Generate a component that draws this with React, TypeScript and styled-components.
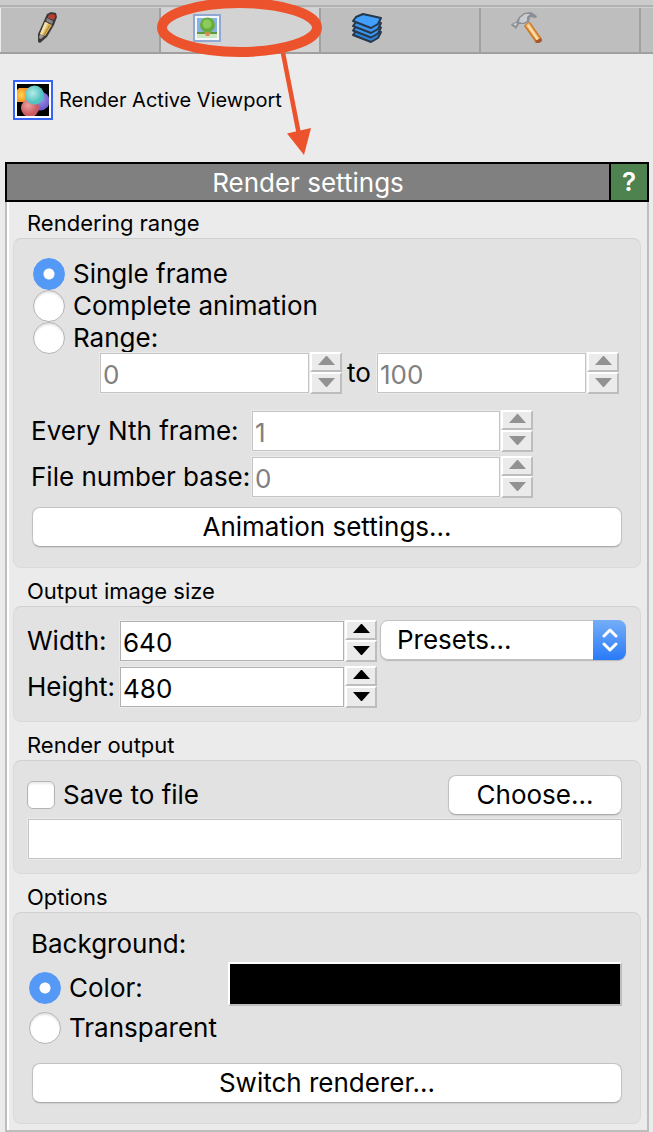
import React, { useState } from "react";
import styled, { createGlobalStyle, css } from "styled-components";

const GlobalStyle = createGlobalStyle`
  * { box-sizing: border-box; }
  body {
    margin: 0;
    background: #ebebeb;
    color: #000;
    font-family: Inter, "Liberation Sans", sans-serif;
    font-size: 26px;
    line-height: 32px;
  }
  button, input, select { font: inherit; color: inherit; margin: 0; }
`;

const Page = styled.main`
  position: relative;
  overflow: hidden;
`;

const TopEdge = styled.div`
  height: 8px;
  border-bottom: 1px solid #d0d0d0;
  background: linear-gradient(#cbcbcb 0 5px, #b0b0b0 5px 7px);
`;

const Tabs = styled.nav`
  display: flex;
  height: 46px;
  padding-left: 1px;
  background: linear-gradient(#bebebe, #bebebe) 1px 0 no-repeat;
  border-bottom: 2px solid #a0a0a0;
`;

const Tab = styled.button<{ $active?: boolean }>`
  display: flex;
  flex: 0 0 160px;
  padding: 4px 0 0 30px;
  border: 0;
  border-right: 2px solid #a0a0a0;
  background: ${(p) => (p.$active ? "#d3d3d3" : "#bebebe")};
`;

const Toolbar = styled.div`
  padding: 26px 13px 42px;
`;

const RenderButton = styled.button`
  display: flex;
  align-items: center;
  gap: 6px;
  padding: 0;
  border: 0;
  background: none;
  font-size: 20px;
`;

const RenderIcon = styled.span`
  display: flex;
  padding: 2px;
  border: 2px solid #3a62f7;
  background: #fff;
`;

const Panel = styled.section`
  margin: 0 4px 0 5px;
`;

const PanelHeader = styled.header`
  display: flex;
  height: 40px;
  border: 2px solid #000;
  background: #808080;
  color: #fff;
`;

const PanelTitle = styled.h1`
  flex: 1;
  margin: 0;
  font-size: 26px;
  font-weight: 400;
  line-height: 38px;
  text-align: center;
`;

const HelpButton = styled.button`
  width: 38px;
  padding: 0;
  border: 0;
  border-left: 2px solid #000;
  background: #4e824e;
  color: #fff;
  font-weight: 600;
`;

const PanelBody = styled.div`
  padding: 0 6px 6px;
  border: solid #bdbdbd;
  border-width: 0 2px 2px;
  box-shadow: inset 2px 0 #fff;
`;

const Group = styled.fieldset`
  min-width: 0;
  margin: 0;
  padding: 0;
  border: 0;
  & + & { margin-top: 2px; }
`;

const Legend = styled.legend`
  height: 36px;
  padding: 6px 14px 0;
  font-size: 22px;
  line-height: 30px;
`;

const GroupBox = styled.div<{ $pad: string }>`
  padding: ${(p) => p.$pad};
  border: 1px solid #dadada;
  border-top-color: #d0d0d0;
  border-radius: 8px;
  background: #e2e2e2;
`;

const ChoiceList = styled.div<{ $indent: number }>`
  padding-left: ${(p) => p.$indent}px;
`;

const ChoiceLabel = styled.label`
  display: flex;
  align-items: center;
  gap: 8px;
  height: 32px;
`;

const Radio = styled.input.attrs({ type: "radio" })`
  appearance: none;
  flex: none;
  width: 32px;
  height: 32px;
  border: 1px solid #b4b4b4;
  border-radius: 50%;
  background: #fff;
  box-shadow: inset 0 2px 2px #e4e4e4;
  &:checked {
    border-color: #5599f6;
    background: radial-gradient(circle, #fff 5px, #5599f6 6px);
    box-shadow: none;
  }
`;

const Checkbox = styled.input.attrs({ type: "checkbox" })`
  appearance: none;
  flex: none;
  width: 28px;
  height: 28px;
  border: 1px solid #b4b4b4;
  border-radius: 6px;
  background: #fff;
  box-shadow: inset 0 2px 2px #ececec;
  &:checked { background: #5599f6; }
`;

const RangeRow = styled.div`
  display: flex;
  align-items: center;
  gap: 5px;
  margin: -2px 3px 16px 72px;
`;

const FieldGrid = styled.div<{ $label: number; $right: number }>`
  display: grid;
  grid-template-columns: ${(p) => p.$label}px minmax(0, 1fr);
  align-items: center;
  row-gap: 4px;
  margin-right: ${(p) => p.$right}px;
`;

const SizeRow = styled.div`
  display: flex;
  align-items: flex-start;
  gap: 3px;
`;

const SizeFields = styled(FieldGrid)`
  flex: 1;
`;

const SpinBox = styled.div`
  display: flex;
  flex: 1;
  min-width: 0;
  height: 42px;
  gap: 1px;
`;

const textField = css`
  height: 40px;
  border: 1px solid #b0b0b0;
  border-radius: 0;
  outline: 1px solid #ebebeb;
  background: #fff;
`;

const SpinInput = styled.input`
  ${textField}
  flex: 1;
  width: 0;
  min-width: 0;
  margin: 1px 0 1px 1px;
  padding: 2px 2px 0;
  &:disabled {
    border-color: #c4c4c4;
    background: #fff;
    color: #808080;
  }
`;

const PathInput = styled.input`
  ${textField}
  display: block;
  width: calc(100% - 1px);
  margin: 4px 0 1px 1px;
  padding: 0 4px;
  border-color: #c4c4c4;
`;

const SpinButtons = styled.div`
  display: grid;
  grid-template-rows: 20px 22px;
  width: 32px;
`;

const SpinButton = styled.button`
  display: flex;
  align-items: flex-start;
  justify-content: center;
  padding: 2px 0 0;
  border: 2px solid;
  border-color: #fff #bdbdbd #bdbdbd #fff;
  background: #ebebeb;
  color: #000;
  & + & { padding-top: 4px; }
  &:disabled { color: #929292; }
`;

const PushButton = styled.button<{ $width?: string }>`
  display: block;
  width: ${(p) => p.$width ?? "auto"};
  height: 40px;
  padding: 0;
  border: 1px solid #c2c2c2;
  border-bottom-color: #ababab;
  border-radius: 8px;
  background: #fff;
  box-shadow: 0 1px 1px #d0d0d0;
`;

const WideButtonRow = styled.div<{ $top: number }>`
  display: grid;
  margin: ${(p) => p.$top}px 0 0 5px;
`;

const PresetBox = styled.div`
  position: relative;
  flex: 0 1 246px;
  height: 40px;
  border-radius: 8px;
  box-shadow: 0 1px 1px #b8b8b8;
`;

const PresetSelect = styled.select`
  appearance: none;
  width: 100%;
  height: 40px;
  padding: 0 40px 0 16px;
  border: 1px solid #c2c2c2;
  border-radius: 8px;
  background: #fff;
`;

const PresetCap = styled.span`
  position: absolute;
  top: 0;
  right: 0;
  display: flex;
  align-items: center;
  justify-content: center;
  width: 33px;
  height: 40px;
  border-radius: 0 8px 8px 0;
  background: linear-gradient(#74aef8, #2a7af8);
  pointer-events: none;
`;

const SaveRow = styled.div`
  display: flex;
  align-items: center;
  justify-content: space-between;
`;

const Caption = styled.div`
  padding-left: 4px;
  line-height: 36px;
`;

const ColorRow = styled.div`
  display: grid;
  grid-template-columns: 201px minmax(0, 1fr);
  align-items: end;
  margin-bottom: 6px;
`;

const ColorChoice = styled.div`
  padding: 0 0 2px 2px;
`;

const Swatch = styled.button`
  height: 44px;
  padding: 0;
  border: 2px solid;
  border-color: #fff #bdbdbd #bdbdbd #fff;
  background: #000;
`;

const Annotation = styled.svg`
  position: absolute;
  top: 0;
  left: 0;
  pointer-events: none;
`;

function PencilIcon() {
  return (
    <svg width="32" height="32" viewBox="0 0 32 32" aria-hidden="true">
      <path d="M16 2 L20 0 L25 1 L26 5 L23 13 L16 25 L9 31 L7 30 L7 22 Z" fill="#3c3a3a" />
      <path d="M17 4 L20 2 L24 4 L23 8 L17 6 Z" fill="#a7463c" />
      <path d="M20 2 L24 3 L24 6 L21 5 Z" fill="#c9352c" />
      <path d="M16 6 L22 9 L21 12 L15 9 Z" fill="#8a8784" />
      <path d="M14 10 L21 13 L14 24 L9 22 Z" fill="#e0b95a" />
      <path d="M14 10 L17 11 L11 23 L9 22 Z" fill="#f0dfb0" />
      <path d="M9 22 L13 24 L10 27 L8 26 Z" fill="#a39c92" />
      <path d="M19 13 L13 23" stroke="#a77b28" strokeWidth="1" />
    </svg>
  );
}

function PictureIcon() {
  return (
    <svg width="32" height="32" viewBox="0 0 32 32" aria-hidden="true">
      <rect x="3" y="3" width="26" height="26" fill="#f4f7fb" stroke="#90a8d2" strokeWidth="2" />
      <rect x="6" y="6" width="20" height="20" fill="#86b2e4" />
      <rect x="6" y="20" width="20" height="6" fill="#cfe6c4" />
      <rect x="6" y="20" width="20" height="2" fill="#5c9c3c" />
      <path d="M13 19 H20 L18 24 H15 Z" fill="#e08a4a" />
      <circle cx="16.500" cy="13" r="7.500" fill="#67ad3d" />
      <circle cx="16" cy="12" r="4.500" fill="#8ccb5b" />
    </svg>
  );
}

function LayersIcon() {
  const sheet = "M12 2 L30 6 L27 12 L20 16 L2 9 L5 5 Z";
  return (
    <svg width="33" height="32" viewBox="0 0 33 32" aria-hidden="true" strokeLinejoin="round">
      <path d={sheet} transform="translate(0 14)" fill="#2e82d8" stroke="#26384a" strokeWidth="2" />
      <path d={sheet} transform="translate(0 9.500)" fill="#3b96f2" stroke="#26384a" strokeWidth="2" />
      <path d={sheet} transform="translate(0 5)" fill="#3b96f2" stroke="#26384a" strokeWidth="2" />
      <path d={sheet} fill="#429ffb" stroke="#26384a" strokeWidth="2" />
    </svg>
  );
}

function HammerIcon() {
  return (
    <svg width="32" height="32" viewBox="0 0 32 32" aria-hidden="true">
      <path d="M16 11 L13 14 L25 31 L30 30 L31 27 L19 10 Z" fill="#c97a2c" />
      <path d="M16 12 L15 14 L26 29 L29 27 L18 11 Z" fill="#f6b867" />
      <path d="M17 13 L27 28" stroke="#fbe0b4" strokeWidth="2" />
      <path d="M24 29 L30 26 L31 29 L28 31 L25 31 Z" fill="#a8562a" />
      <path d="M0 12 L5 10 L8 5 L13 1 L20 0 L26 4 L25 6 L19 5 L18 10 L13 12 L8 12 L5 17 L3 15 L1 14 Z" fill="#8b8f93" />
      <path d="M9 6 L14 2 L19 2 L16 5 L16 9 L12 11 L8 10 Z" fill="#c9cdd1" />
      <path d="M2 12 L6 11 L5 14 Z" fill="#d6d9dc" />
    </svg>
  );
}

function SpheresIcon() {
  return (
    <svg width="32" height="32" viewBox="0 0 32 32" aria-hidden="true">
      <defs>
        <radialGradient id="orange" cx="0.35" cy="0.5"><stop offset="0" stopColor="#ffd84a" /><stop offset="1" stopColor="#f9962c" /></radialGradient>
        <radialGradient id="purple" cx="0.5" cy="0.4"><stop offset="0" stopColor="#a59ae8" /><stop offset="1" stopColor="#6f60cc" /></radialGradient>
        <radialGradient id="red" cx="0.4" cy="0.35"><stop offset="0" stopColor="#eba0a2" /><stop offset="1" stopColor="#cb5c61" /></radialGradient>
        <radialGradient id="teal" cx="0.4" cy="0.4"><stop offset="0" stopColor="#b4ece8" /><stop offset="1" stopColor="#50c2c0" /></radialGradient>
      </defs>
      <rect width="32" height="32" fill="#000" />
      <path d="M2 4 H12 V18 H0 V6 Z" fill="url(#orange)" />
      <circle cx="23" cy="17" r="9.500" fill="url(#purple)" />
      <circle cx="13" cy="24" r="9" fill="url(#red)" />
      <circle cx="17.500" cy="11" r="9.500" fill="url(#teal)" />
    </svg>
  );
}

interface SpinProps {
  label?: string;
  id: string;
  value: number;
  onChange: (value: number) => void;
  disabled?: boolean;
}

function Spin({ label, id, value, onChange, disabled }: SpinProps) {
  return (
    <SpinBox>
      <SpinInput
        id={id}
        aria-label={label}
        inputMode="numeric"
        value={value}
        disabled={disabled}
        onChange={(e) => onChange(Number(e.target.value) || 0)}
      />
      <SpinButtons>
        <SpinButton aria-label="Increase" disabled={disabled} onClick={() => onChange(value + 1)}>
          <svg width="17" height="9" viewBox="0 0 17 9"><path d="M0 9 L8 0 H9 L17 9 Z" fill="currentColor" /></svg>
        </SpinButton>
        <SpinButton aria-label="Decrease" disabled={disabled} onClick={() => onChange(value - 1)}>
          <svg width="17" height="9" viewBox="0 0 17 9"><path d="M0 0 L8 9 H9 L17 0 Z" fill="currentColor" /></svg>
        </SpinButton>
      </SpinButtons>
    </SpinBox>
  );
}

export default function App() {
  const [range, setRange] = useState("single");
  const [from, setFrom] = useState(0);
  const [to, setTo] = useState(100);
  const [every, setEvery] = useState(1);
  const [base, setBase] = useState(0);
  const [width, setWidth] = useState(640);
  const [height, setHeight] = useState(480);
  const [background, setBackground] = useState("color");

  const ranges = [
    ["single", "Single frame"],
    ["complete", "Complete animation"],
    ["range", "Range:"],
  ];

  return (
    <Page>
      <GlobalStyle />
      <TopEdge />
      <Tabs>
        <Tab aria-label="Modify"><PencilIcon /></Tab>
        <Tab aria-label="Render" $active><PictureIcon /></Tab>
        <Tab aria-label="Overlays"><LayersIcon /></Tab>
        <Tab aria-label="Utilities"><HammerIcon /></Tab>
      </Tabs>

      <Toolbar>
        <RenderButton>
          <RenderIcon><SpheresIcon /></RenderIcon>
          Render Active Viewport
        </RenderButton>
      </Toolbar>

      <Panel>
        <PanelHeader>
          <PanelTitle>Render settings</PanelTitle>
          <HelpButton>?</HelpButton>
        </PanelHeader>
        <PanelBody>
          <Group>
            <Legend>Rendering range</Legend>
            <GroupBox $pad="19px 18px 20px 13px">
              <ChoiceList $indent={6}>
                {ranges.map(([value, text]) => (
                  <ChoiceLabel key={value}>
                    <Radio name="range" checked={range === value} onChange={() => setRange(value)} />
                    {text}
                  </ChoiceLabel>
                ))}
              </ChoiceList>
              <RangeRow>
                <Spin id="from" label="Range start" value={from} onChange={setFrom} disabled={range !== "range"} />
                to
                <Spin id="to" label="Range end" value={to} onChange={setTo} disabled={range !== "range"} />
              </RangeRow>
              <FieldGrid $label={224} $right={89}>
                <Caption as="label" htmlFor="every">Every Nth frame:</Caption>
                <Spin id="every" value={every} onChange={setEvery} disabled={range === "single"} />
                <Caption as="label" htmlFor="base">File number base:</Caption>
                <Spin id="base" value={base} onChange={setBase} disabled={range === "single"} />
              </FieldGrid>
              <WideButtonRow $top={9}>
                <PushButton>Animation settings...</PushButton>
              </WideButtonRow>
            </GroupBox>
          </Group>

          <Group>
            <Legend>Output image size</Legend>
            <GroupBox $pad="13px 14px 13px 13px">
              <SizeRow>
                <SizeFields $label={92} $right={0}>
                  <label htmlFor="width">Width:</label>
                  <Spin id="width" value={width} onChange={setWidth} />
                  <label htmlFor="height">Height:</label>
                  <Spin id="height" value={height} onChange={setHeight} />
                </SizeFields>
                <PresetBox>
                  <PresetSelect aria-label="Presets"><option>Presets...</option></PresetSelect>
                  <PresetCap>
                    <svg width="16" height="24" viewBox="0 0 16 24" fill="none" stroke="#fff" strokeWidth="3" strokeLinecap="round" strokeLinejoin="round">
                      <path d="M2 8 L8 2 L14 8 M2 16 L8 22 L14 16" />
                    </svg>
                  </PresetCap>
                </PresetBox>
              </SizeRow>
            </GroupBox>
          </Group>

          <Group>
            <Legend>Render output</Legend>
            <GroupBox $pad="14px 18px 13px 13px">
              <SaveRow>
                <ChoiceLabel><Checkbox />Save to file</ChoiceLabel>
                <PushButton $width="174px">Choose...</PushButton>
              </SaveRow>
              <PathInput type="text" aria-label="Output file" />
            </GroupBox>
          </Group>

          <Group>
            <Legend>Options</Legend>
            <GroupBox $pad="13px 18px 20px 13px">
              <Caption>Background:</Caption>
              <ColorRow>
                <ColorChoice>
                  <ChoiceLabel>
                    <Radio name="background" checked={background === "color"} onChange={() => setBackground("color")} />
                    Color:
                  </ChoiceLabel>
                </ColorChoice>
                <Swatch aria-label="Background color" />
              </ColorRow>
              <ChoiceList $indent={2}>
                <ChoiceLabel>
                  <Radio name="background" checked={background === "transparent"} onChange={() => setBackground("transparent")} />
                  Transparent
                </ChoiceLabel>
              </ChoiceList>
              <WideButtonRow $top={19}>
                <PushButton>Switch renderer...</PushButton>
              </WideButtonRow>
            </GroupBox>
          </Group>
        </PanelBody>
      </Panel>

      <Annotation width="330" height="160" viewBox="0 0 330 160" aria-hidden="true">
        <ellipse cx="239.5" cy="27.5" rx="77.5" ry="24.5" fill="none" stroke="#ec522c" strokeWidth="10" />
        <path d="M283 53 L298.500 132" stroke="#ec522c" strokeWidth="4.500" />
        <path d="M287 133.500 L311 128 L304 155 Z" fill="#ec522c" />
      </Annotation>
    </Page>
  );
}
